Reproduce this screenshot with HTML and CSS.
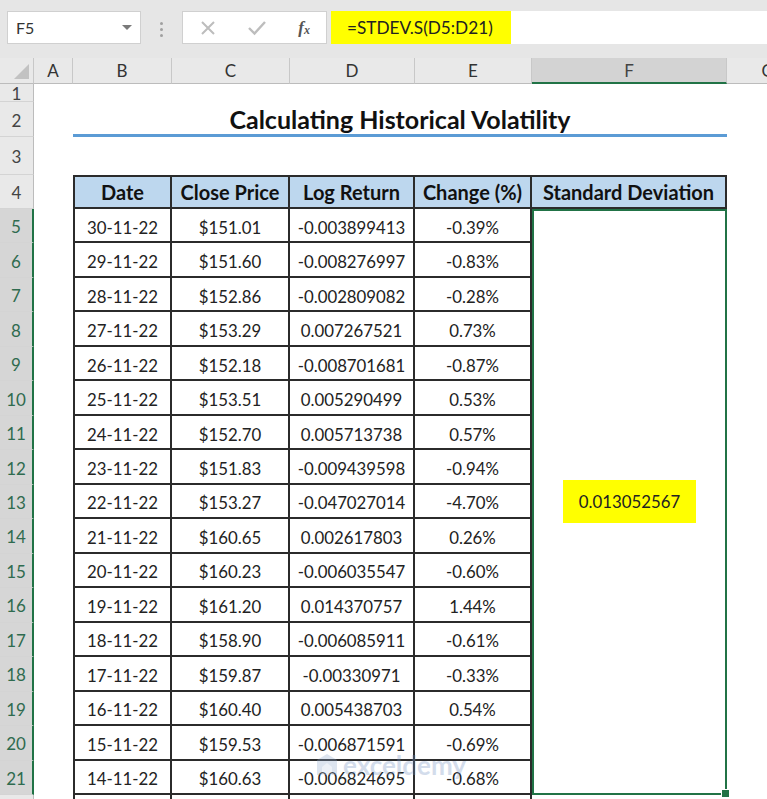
FILE: index.html
```html
<!DOCTYPE html>
<html lang="en">
<head>
    <meta charset="UTF-8">
    <title>Calculating Historical Volatility</title>
    <link rel="stylesheet" href="styles.css">
</head>
<body>
    <div class="formula-bar">
        <div class="name-box">
            <span>F5</span>
            <span class="arrow"></span>
        </div>
        <div class="grip"><i></i><i></i><i></i></div>
        <div class="fx-buttons">
            <svg width="16" height="16" viewBox="0 0 16 16"><path d="M2 2 L14 14 M14 2 L2 14" stroke="#bdbdbd" stroke-width="2" fill="none"/></svg>
            <svg width="18" height="16" viewBox="0 0 18 16"><path d="M1 8 L6.5 13.5 L17 2" stroke="#bdbdbd" stroke-width="2.4" fill="none"/></svg>
            <span class="fx">f<sub>x</sub></span>
        </div>
        <div class="formula">
            <span class="formula-text">=STDEV.S(D5:D21)</span>
        </div>
    </div>

    <div class="sheet">
        <!-- column headers -->
        <div class="ch corner"><span class="tri"></span></div>
        <div class="ch">A</div>
        <div class="ch">B</div>
        <div class="ch">C</div>
        <div class="ch">D</div>
        <div class="ch">E</div>
        <div class="ch sel">F</div>
        <div class="ch g">G</div>

        <!-- row 1 -->
        <div class="rh">1</div>
        <div></div><div></div><div></div><div></div><div></div><div></div><div></div>

        <!-- row 2 -->
        <div class="rh">2</div>
        <div></div>
        <div class="title">Calculating Historical Volatility</div>
        <div></div>

        <!-- row 3 -->
        <div class="rh">3</div>
        <div></div><div></div><div></div><div></div><div></div><div></div><div></div>

        <!-- row 4 -->
        <div class="rh">4</div>
        <div></div>
        <div class="td hd first">Date</div>
        <div class="td hd">Close Price</div>
        <div class="td hd">Log Return</div>
        <div class="td hd">Change (%)</div>
        <div class="td hd">Standard Deviation</div>
        <div></div>

        <!-- row 5 -->
        <div class="rh sel">5</div>
        <div></div>
        <div class="td first">30-11-22</div>
        <div class="td">$151.01</div>
        <div class="td">-0.003899413</div>
        <div class="td">-0.39%</div>
        <div class="merged"><span class="value">0.013052567</span></div>
        <div></div>

        <div class="rh sel">6</div><div></div>
        <div class="td first">29-11-22</div><div class="td">$151.60</div><div class="td">-0.008276997</div><div class="td">-0.83%</div><div></div>

        <div class="rh sel">7</div><div></div>
        <div class="td first">28-11-22</div><div class="td">$152.86</div><div class="td">-0.002809082</div><div class="td">-0.28%</div><div></div>

        <div class="rh sel">8</div><div></div>
        <div class="td first">27-11-22</div><div class="td">$153.29</div><div class="td">0.007267521</div><div class="td">0.73%</div><div></div>

        <div class="rh sel">9</div><div></div>
        <div class="td first">26-11-22</div><div class="td">$152.18</div><div class="td">-0.008701681</div><div class="td">-0.87%</div><div></div>

        <div class="rh sel">10</div><div></div>
        <div class="td first">25-11-22</div><div class="td">$153.51</div><div class="td">0.005290499</div><div class="td">0.53%</div><div></div>

        <div class="rh sel">11</div><div></div>
        <div class="td first">24-11-22</div><div class="td">$152.70</div><div class="td">0.005713738</div><div class="td">0.57%</div><div></div>

        <div class="rh sel">12</div><div></div>
        <div class="td first">23-11-22</div><div class="td">$151.83</div><div class="td">-0.009439598</div><div class="td">-0.94%</div><div></div>

        <div class="rh sel">13</div><div></div>
        <div class="td first">22-11-22</div><div class="td">$153.27</div><div class="td">-0.047027014</div><div class="td">-4.70%</div><div></div>

        <div class="rh sel">14</div><div></div>
        <div class="td first">21-11-22</div><div class="td">$160.65</div><div class="td">0.002617803</div><div class="td">0.26%</div><div></div>

        <div class="rh sel">15</div><div></div>
        <div class="td first">20-11-22</div><div class="td">$160.23</div><div class="td">-0.006035547</div><div class="td">-0.60%</div><div></div>

        <div class="rh sel">16</div><div></div>
        <div class="td first">19-11-22</div><div class="td">$161.20</div><div class="td">0.014370757</div><div class="td">1.44%</div><div></div>

        <div class="rh sel">17</div><div></div>
        <div class="td first">18-11-22</div><div class="td">$158.90</div><div class="td">-0.006085911</div><div class="td">-0.61%</div><div></div>

        <div class="rh sel">18</div><div></div>
        <div class="td first">17-11-22</div><div class="td">$159.87</div><div class="td">-0.00330971</div><div class="td">-0.33%</div><div></div>

        <div class="rh sel">19</div><div></div>
        <div class="td first">16-11-22</div><div class="td">$160.40</div><div class="td">0.005438703</div><div class="td">0.54%</div><div></div>

        <div class="rh sel">20</div><div></div>
        <div class="td first">15-11-22</div><div class="td">$159.53</div><div class="td">-0.006871591</div><div class="td">-0.69%</div><div></div>

        <div class="rh sel">21</div><div></div>
        <div class="td first">14-11-22</div><div class="td">$160.63</div><div class="td">-0.006824695</div><div class="td">-0.68%</div><div></div>

        <!-- row 22 (cut off by the window) -->
        <div class="rh"></div><div></div>
        <div class="td first"></div><div class="td"></div><div class="td"></div><div class="td"></div><div></div><div></div>

        <div class="watermark">
            <svg width="22" height="24" viewBox="0 0 22 24"><path d="M11 1 L21 7 L21 22 L1 22 L1 7 Z" fill="#8fa9cc"/><path d="M6 14 L11 10 L16 14 L16 22 L6 22 Z" fill="#c4d3e6"/></svg>
            <span class="wm-name">exceldemy</span>
        </div>
    </div>
</body>
</html>
```

FILE: styles.css
```css
* {
    margin: 0;
    padding: 0;
    box-sizing: border-box;
}

body {
    font-family: 'Lato', 'Liberation Sans', sans-serif;
    background: #ffffff;
    color: #222;
    width: 767px;
    height: 799px;
    overflow: hidden;
}

/* formula bar */
.formula-bar {
    height: 58px;
    background: #e6e6e6;
    display: flex;
    align-items: flex-start;
    padding-top: 11px;
    padding-left: 7px;
}

.name-box {
    width: 134px;
    height: 33px;
    background: #fff;
    border: 1px solid #d0d0d0;
    display: flex;
    align-items: center;
    justify-content: space-between;
    padding: 0 8px 0 8px;
    font-size: 16px;
    color: #333;
}

.name-box .arrow {
    width: 0;
    height: 0;
    border-left: 5px solid transparent;
    border-right: 5px solid transparent;
    border-top: 5px solid #7a7a7a;
}

.grip {
    width: 41px;
    display: flex;
    flex-direction: column;
    align-items: center;
    gap: 3px;
    padding-top: 11px;
}

.grip i {
    width: 3px;
    height: 3px;
    border-radius: 50%;
    background: #a0a0a0;
}

.fx-buttons {
    width: 145px;
    height: 33px;
    background: #fff;
    border: 1px solid #d0d0d0;
    display: flex;
    align-items: center;
    justify-content: space-between;
    padding: 0 16px 0 17px;
}

.fx {
    font-family: 'Liberation Serif', serif;
    font-style: italic;
    font-weight: bold;
    font-size: 17px;
    color: #555;
    line-height: 1;
}

.fx sub {
    font-size: 12px;
    vertical-align: -1px;
}

.formula {
    flex: 1;
    margin-left: 4px;
    height: 33px;
    background: #fff;
    display: flex;
}

.formula-text {
    background: #ffff00;
    width: 180px;
    padding-left: 16px;
    display: flex;
    align-items: center;
    font-size: 17.2px;
    color: #222;
}

/* sheet grid */
.sheet {
    position: relative;
    display: grid;
    grid-template-columns: 34px 39px 99px 118px 125px 117px 195px 40px;
    grid-template-rows: 26px 18px 35px 38px 34px repeat(17, 34.47px) 20px;
}

.ch {
    background: #e9e9e9;
    border-right: 1px solid #c8c8c8;
    border-bottom: 1px solid #bcbcbc;
    display: flex;
    align-items: center;
    justify-content: center;
    font-size: 17px;
    color: #333;
}

.ch.sel {
    background: #d3d3d3;
    border-bottom: 2px solid #217346;
    color: #444;
}

.ch.g {
    justify-content: flex-end;
    margin-right: -8px;
}

.corner {
    position: relative;
}

.corner .tri {
    position: absolute;
    right: 4px;
    bottom: 4px;
    width: 0;
    height: 0;
    border-left: 15px solid transparent;
    border-bottom: 15px solid #c2c2c2;
}

.rh {
    background: #e9e9e9;
    border-right: 1px solid #bcbcbc;
    border-bottom: 1px solid #d4d4d4;
    display: flex;
    align-items: center;
    justify-content: center;
    padding-top: 2px;
    font-size: 17px;
    color: #444;
}

.rh.sel {
    background: #d6d6d6;
    border-right: 2px solid #217346;
    color: #2f6b4f;
}

.title {
    grid-column: span 5;
    border-bottom: 3px solid #5b9bd5;
    display: flex;
    align-items: center;
    justify-content: center;
    padding-top: 2px;
    font-size: 25px;
    font-weight: bold;
    color: #111;
}

.td {
    border-right: 2px solid #2b2b2b;
    border-bottom: 2px solid #2b2b2b;
    display: flex;
    align-items: center;
    justify-content: center;
    padding-top: 4px;
    font-size: 16.8px;
    color: #222;
}

.td.first {
    border-left: 2px solid #2b2b2b;
}

.td.hd {
    background: #bdd7ee;
    border-top: 2px solid #2b2b2b;
    padding-top: 0;
    font-weight: bold;
    font-size: 20px;
    color: #111;
}

.merged {
    grid-row: span 17;
    position: relative;
    border: 2px solid #217346;
    display: flex;
    align-items: center;
    justify-content: center;
}

.merged::after {
    content: '';
    position: absolute;
    right: -5px;
    bottom: -5px;
    width: 7px;
    height: 7px;
    background: #217346;
    border: 1px solid #fff;
}

.value {
    background: #ffff00;
    padding: 11px 16px;
    font-size: 16.8px;
    color: #222;
}

/* faint site watermark */
.watermark {
    position: absolute;
    left: 316px;
    top: 694px;
    display: flex;
    align-items: center;
    gap: 5px;
    opacity: 0.3;
    pointer-events: none;
}

.wm-name {
    font-size: 26px;
    font-weight: bold;
    line-height: 1;
    color: #6f8fbf;
}
```
